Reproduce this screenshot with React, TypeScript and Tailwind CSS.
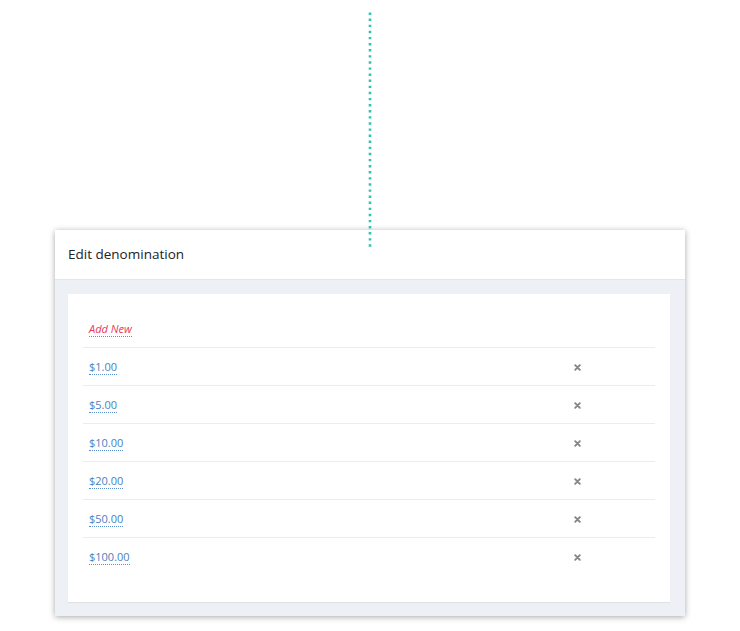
import React from "react";

const items = ["$1.00", "$5.00", "$10.00", "$20.00", "$50.00", "$100.00"];

function XIcon() {
  return (
    <svg width="7" height="7" viewBox="0 0 7 7">
      <path d="M1.2 1.2L5.8 5.8M5.8 1.2L1.2 5.8" stroke="#858585" strokeWidth="1.9" strokeLinecap="round" />
    </svg>
  );
}

export default function App() {
  return (
    <div
      className="relative h-[631px] w-[740px] overflow-hidden bg-white"
      style={{ fontFamily: '"Open Sans", "Liberation Sans", sans-serif' }}
    >
      <div className="pl-[55px] pt-[230px]">
        <div className="w-[630px] bg-white shadow-[0_1px_6px_rgba(0,0,0,0.35)]">
          <div className="flex h-[50px] items-center border-b border-[#e3e6ea] px-[13px] pb-[1px] text-[13.5px] text-[#222]">
            Edit denomination
          </div>
          <div className="bg-[#edf0f4] pb-[14px] pl-[13px] pr-[15px] pt-[14px]">
            <div className="bg-white px-[15px] pb-[26px] pt-[16px] shadow-[0_1px_1px_rgba(0,0,0,0.06)]">
              <div className="flex h-[38px] items-center border-b border-[#ececec] pl-[6px]">
                <span className="border-b border-dotted border-[#5b8fd1] text-[11px] italic leading-[15px] text-[#e8395a]">
                  Add New
                </span>
              </div>
              {items.map((v, i) => (
                <div
                  key={v}
                  className={`flex h-[38px] items-center pl-[6px] ${
                    i < items.length - 1 ? "border-b border-[#ececec]" : ""
                  }`}
                >
                  <span className="border-b border-dotted border-[#5b8fd1] text-[11px] leading-[15px] text-[#4a7fc0]">
                    {v}
                  </span>
                  <div className="flex-1" />
                  <div className="flex w-[156px] justify-center pt-[1px]">
                    <XIcon />
                  </div>
                </div>
              ))}
            </div>
          </div>
        </div>
      </div>
      <svg className="absolute left-[367px] top-[10px]" width="6" height="240">
        <line
          x1="3"
          y1="2.5"
          x2="3"
          y2="238"
          stroke="#2ec4b0"
          strokeWidth="2.6"
          strokeDasharray="2.4 3.7"
        />
      </svg>
    </div>
  );
}
